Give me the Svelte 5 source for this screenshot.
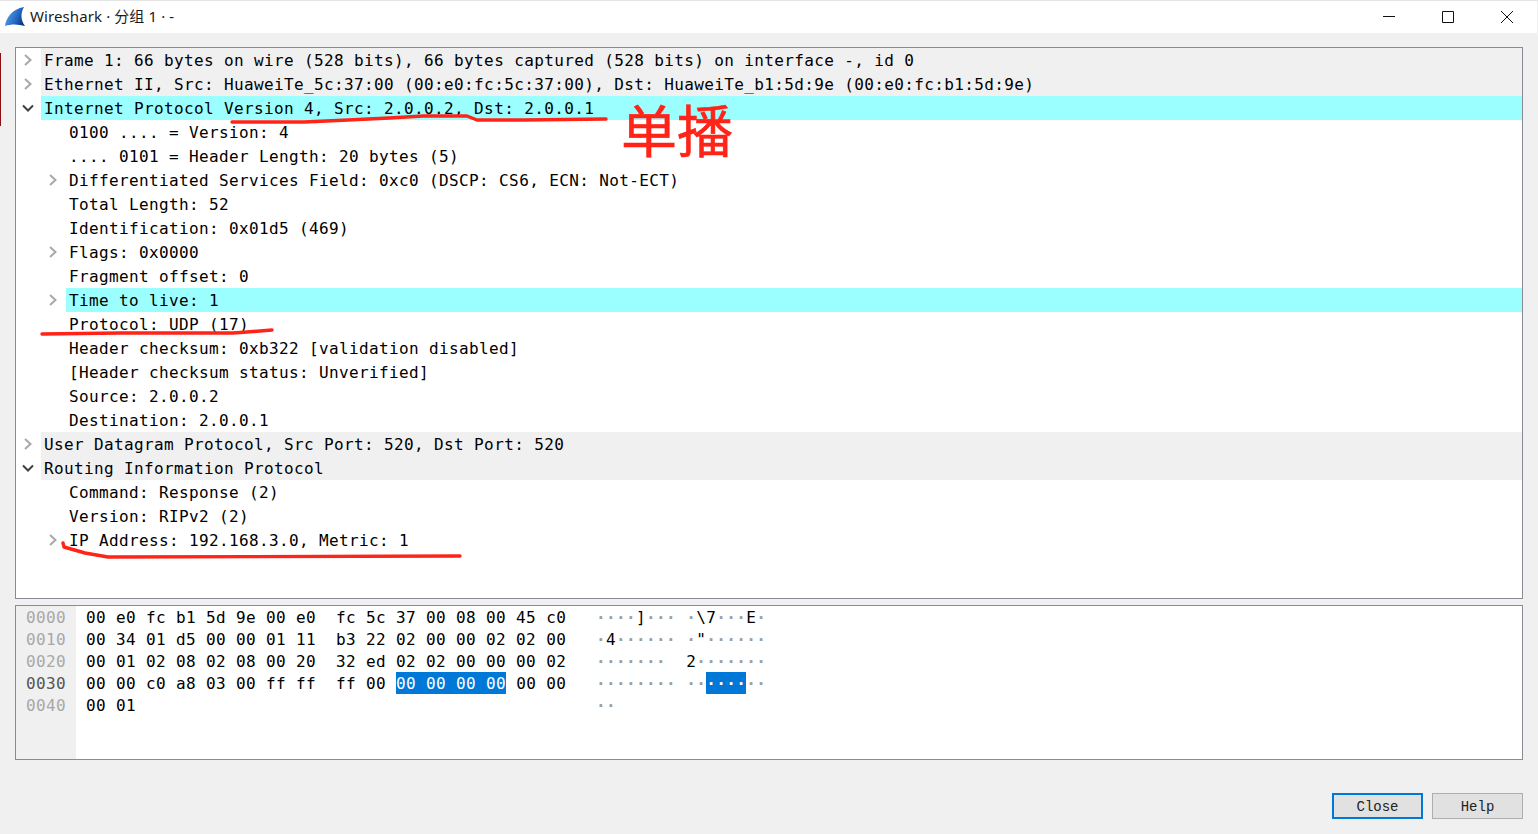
<script lang="ts">
	const rows = [
		{ depth: 0, text: 'Frame 1: 66 bytes on wire (528 bits), 66 bytes captured (528 bits) on interface -, id 0', exp: 'closed', tone: 'gray' },
		{ depth: 0, text: 'Ethernet II, Src: HuaweiTe_5c:37:00 (00:e0:fc:5c:37:00), Dst: HuaweiTe_b1:5d:9e (00:e0:fc:b1:5d:9e)', exp: 'closed', tone: 'gray' },
		{ depth: 0, text: 'Internet Protocol Version 4, Src: 2.0.0.2, Dst: 2.0.0.1', exp: 'open', tone: 'cyan' },
		{ depth: 1, text: '0100 .... = Version: 4' },
		{ depth: 1, text: '.... 0101 = Header Length: 20 bytes (5)' },
		{ depth: 1, text: 'Differentiated Services Field: 0xc0 (DSCP: CS6, ECN: Not-ECT)', exp: 'closed' },
		{ depth: 1, text: 'Total Length: 52' },
		{ depth: 1, text: 'Identification: 0x01d5 (469)' },
		{ depth: 1, text: 'Flags: 0x0000', exp: 'closed' },
		{ depth: 1, text: 'Fragment offset: 0' },
		{ depth: 1, text: 'Time to live: 1', exp: 'closed', tone: 'cyan' },
		{ depth: 1, text: 'Protocol: UDP (17)' },
		{ depth: 1, text: 'Header checksum: 0xb322 [validation disabled]' },
		{ depth: 1, text: '[Header checksum status: Unverified]' },
		{ depth: 1, text: 'Source: 2.0.0.2' },
		{ depth: 1, text: 'Destination: 2.0.0.1' },
		{ depth: 0, text: 'User Datagram Protocol, Src Port: 520, Dst Port: 520', exp: 'closed', tone: 'gray' },
		{ depth: 0, text: 'Routing Information Protocol', exp: 'open', tone: 'gray' },
		{ depth: 1, text: 'Command: Response (2)' },
		{ depth: 1, text: 'Version: RIPv2 (2)' },
		{ depth: 1, text: 'IP Address: 192.168.3.0, Metric: 1', exp: 'closed' }
	];

	// hex and ascii are [before selection, selected, after selection]
	const hexRows = [
		{ off: '0000', hex: ['00 e0 fc b1 5d 9e 00 e0  fc 5c 37 00 08 00 45 c0'], asc: ['····]··· ·\\7···E·'] },
		{ off: '0010', hex: ['00 34 01 d5 00 00 01 11  b3 22 02 00 00 02 02 00'], asc: ['·4······ ·"······'] },
		{ off: '0020', hex: ['00 01 02 08 02 08 00 20  32 ed 02 02 00 00 00 02'], asc: ['·······  2·······'] },
		{
			off: '0030',
			active: true,
			hex: ['00 00 c0 a8 03 00 ff ff  ff 00 ', '00 00 00 00', ' 00 00'],
			asc: ['········ ··', '····', '··']
		},
		{ off: '0040', hex: ['00 01'], asc: ['··'] }
	];
</script>

{#snippet ascii(text: string)}{#each text.split('') as ch}<span class:dot={ch === '·'}>{ch}</span>{/each}{/snippet}

<div class="window">
	<header class="titlebar">
		<svg class="fin" viewBox="0 0 20 20" width="20" height="20" aria-hidden="true">
			<defs>
				<linearGradient id="finFill" x1="0" y1="0.3" x2="1" y2="0.7">
					<stop offset="0" stop-color="#5aa5ea" />
					<stop offset="0.65" stop-color="#1f62bd" />
					<stop offset="1" stop-color="#0a2f78" />
				</linearGradient>
			</defs>
			<path d="M0 19 C1 11 7 2 19 0 C15.5 6 15.5 13 20 19 C13 17 6 17 0 19 Z" fill="url(#finFill)" />
		</svg>
		<span class="title">Wireshark · 分组 1 · -</span>
		<div class="controls">
			<svg viewBox="0 0 12 12" width="12" height="12" aria-hidden="true"><path d="M0 5.5H12" /></svg>
			<svg viewBox="0 0 12 12" width="12" height="12" aria-hidden="true"><path d="M.5 .5H11.5V11.5H.5Z" /></svg>
			<svg viewBox="0 0 12 12" width="12" height="12" aria-hidden="true"><path d="M0 0L12 12M12 0L0 12" /></svg>
		</div>
	</header>

	<main class="body">
		<section class="tree">
			{#each rows as row}
				<div class="row" class:nested={row.depth === 1}>
					<span class="arrow">
						{#if row.exp === 'closed'}
							<svg viewBox="0 0 8 12" width="8" height="12" aria-hidden="true"><path class="closed" d="M1 1L6.5 6L1 11" /></svg>
						{:else if row.exp === 'open'}
							<svg viewBox="0 0 12 8" width="12" height="8" aria-hidden="true"><path class="open" d="M1 1.5L6 6.5L11 1.5" /></svg>
						{/if}
					</span>
					<span class="label {row.tone ?? ''}">{row.text}</span>
				</div>
			{/each}
		</section>

		<section class="hex">
			<div class="gutter">
				{#each hexRows as line}
					<div class="offset" class:active={line.active}>{line.off}</div>
				{/each}
			</div>
			<div class="bytes">
				{#each hexRows as line}
					<div class="hexline">
						<span class="hexcol">{line.hex[0]}{#if line.hex[1]}<span class="sel">{line.hex[1]}</span>{line.hex[2]}{/if}</span>
						<span class="asccol">{@render ascii(line.asc[0])}{#if line.asc[1]}<span class="sel">{@render ascii(line.asc[1])}</span>{@render ascii(line.asc[2])}{/if}</span>
					</div>
				{/each}
			</div>
		</section>

		<footer class="buttons">
			<button class="default">Close</button>
			<button>Help</button>
		</footer>
	</main>

	<span class="edge"></span>

	<svg class="marks" width="1538" height="834" aria-hidden="true">
		<path d="M232 122L304 122L348 120L389 118L423 116L467 116L477 120L524 120L606 119" />
		<path d="M42 334L120 333L233 333L247 332L272 330" />
		<path d="M63 543L64 547L85 553L108 557L460 556" />
	</svg>
	<span class="note">单播</span>
</div>

<style>
	:global(body) {
		background: #f0f0f0;
	}

	.window {
		position: relative;
		width: 1538px;
		height: 834px;
		box-sizing: border-box;
		overflow: hidden;
		display: flex;
		flex-direction: column;
		border-top: 1px solid #e4e4e4;
		background: #f0f0f0;
		color: #000;
	}

	.titlebar {
		display: flex;
		align-items: center;
		height: 32px;
		margin-right: 1px;
		padding-left: 5px;
		background: #fff;
		flex: none;
	}

	.fin {
		margin-right: 5px;
	}

	.title {
		padding-bottom: 3px;
		font-family: 'Noto Sans', 'Noto Sans CJK SC', sans-serif;
		font-size: 15px;
		letter-spacing: 0.1px;
		color: #1a1a1a;
	}

	.controls {
		display: flex;
		gap: 47px;
		margin-left: auto;
		margin-right: 24px;
	}

	.controls path {
		fill: none;
		stroke: #111;
		stroke-width: 1;
	}

	.body {
		display: flex;
		flex-direction: column;
		flex: 1;
		padding: 14px 15px 0;
	}

	.tree {
		height: 552px;
		box-sizing: border-box;
		background: #fff;
		border: 1px solid #8b8b93;
		font-family: 'DejaVu Sans Mono', monospace;
		font-size: 16px;
		letter-spacing: 0.37px;
	}

	.row {
		display: flex;
		height: 24px;
		line-height: 24px;
		white-space: pre;
		color: #000;
	}

	.arrow {
		display: flex;
		align-items: center;
		justify-content: center;
		width: 25px;
		box-sizing: border-box;
		padding-right: 1px;
		flex: none;
	}

	.nested {
		padding-left: 25px;
	}

	.arrow path {
		fill: none;
		stroke-width: 2;
	}

	.closed {
		stroke: #a8a8a8;
	}

	.open {
		stroke: #404040;
	}

	.label {
		flex: 1;
		padding: 1px 0 0 3px;
		line-height: 23px;
		height: 23px;
	}

	.gray {
		background: #f0f0f0;
	}

	.cyan {
		background: #9cffff;
	}

	.hex {
		display: flex;
		height: 155px;
		box-sizing: border-box;
		margin-top: 6px;
		background: #fff;
		border: 1px solid #8b8b93;
		font-family: 'DejaVu Sans Mono', monospace;
		font-size: 16px;
		letter-spacing: 0.37px;
		white-space: pre;
	}

	.gutter {
		width: 60px;
		box-sizing: border-box;
		padding-left: 10px;
		background: #f0f0f0;
		color: #a8a8a8;
		flex: none;
	}

	.offset,
	.hexline {
		height: 22px;
		line-height: 24px;
	}

	.offset.active {
		color: #555;
	}

	.bytes {
		padding-left: 10px;
	}

	.hexline {
		display: flex;
		color: #000;
	}

	.hexcol {
		width: 510px;
		flex: none;
	}

	.asccol {
		color: #000;
	}

	.dot {
		color: #9a9ea3;
		font-weight: 700;
	}

	.sel {
		display: inline-block;
		height: 22px;
		background: #0078d7;
		color: #fff;
	}

	.sel .dot {
		color: #fff;
	}

	.buttons {
		display: flex;
		justify-content: flex-end;
		gap: 9px;
		margin-top: 33px;
	}

	.buttons button {
		width: 91px;
		height: 26px;
		padding: 2px 0 0;
		background: #e1e1e1;
		border: 1px solid #adadad;
		font-family: 'Liberation Mono', monospace;
		font-size: 14px;
		color: #222;
	}

	.buttons .default {
		border: 2px solid #0078d7;
	}

	.edge {
		position: absolute;
		left: 0;
		top: 52px;
		width: 1px;
		height: 73px;
		background: #8f1010;
	}

	.marks {
		position: absolute;
		top: -1px;
		left: 0;
		pointer-events: none;
	}

	.marks path {
		fill: none;
		stroke: #ff2318;
		stroke-width: 3.4;
		stroke-linecap: round;
		stroke-linejoin: round;
	}

	.note {
		position: absolute;
		left: 621px;
		top: 88px;
		font-family: 'Noto Sans CJK SC', sans-serif;
		font-size: 56px;
		line-height: 78px;
		-webkit-text-stroke: 0.6px #ff2318;
		color: #ff2318;
	}
</style>
